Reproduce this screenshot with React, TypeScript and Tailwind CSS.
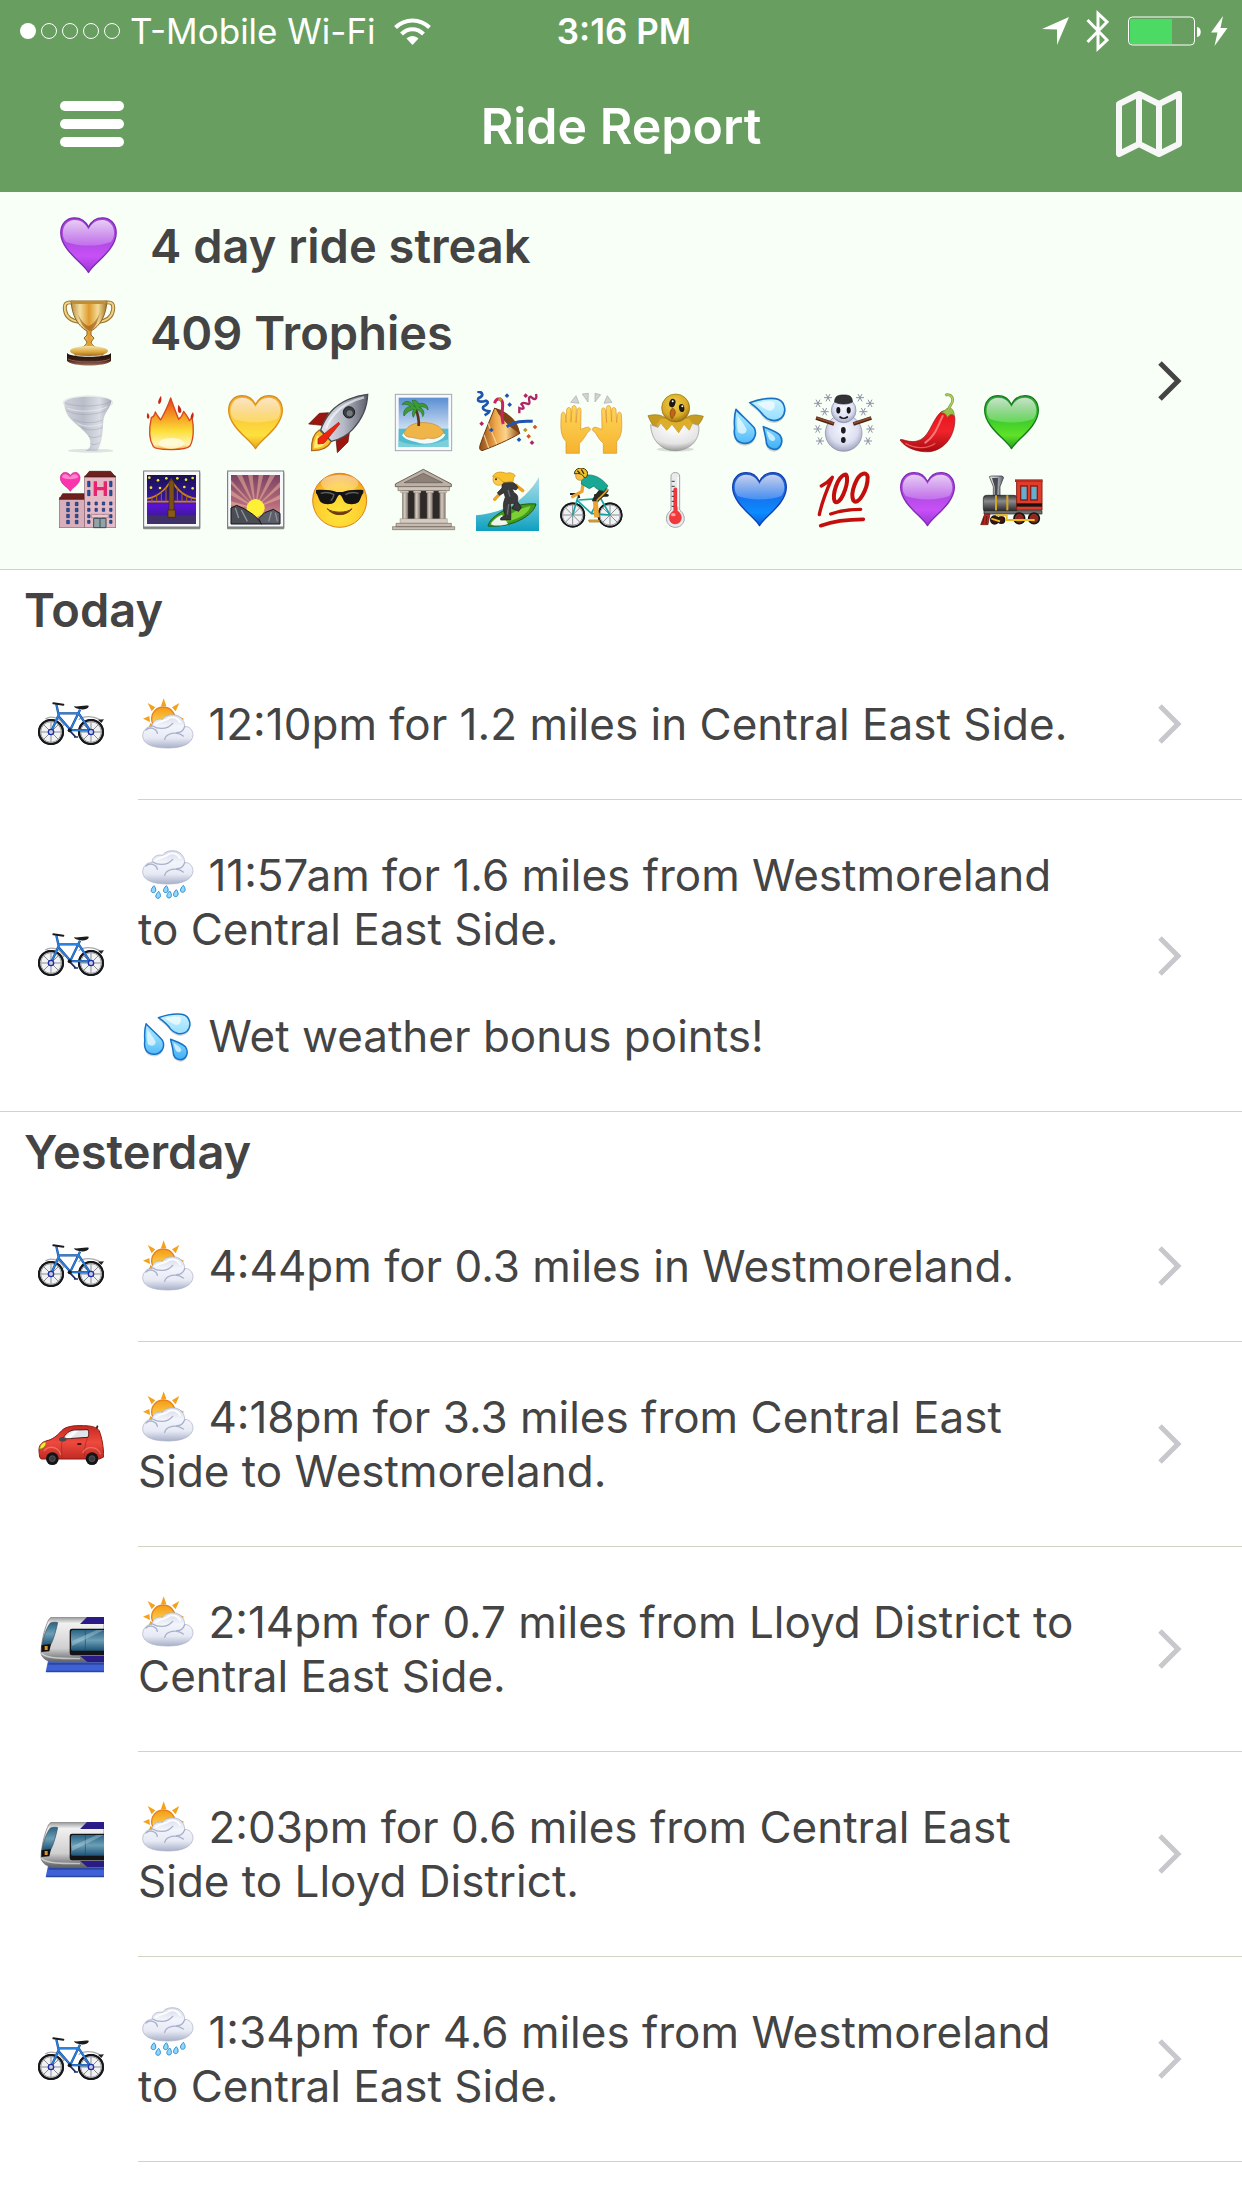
import type { ReactNode } from "react";

type ArtProps = { className?: string; view?: string };

function Art({ label, view, className, children }: { label: string; view: string; className?: string; children: ReactNode }) {
  return (
    <svg role="img" aria-label={label} viewBox={view} className={className ?? "size-16 shrink-0"} fill="none">
      {children}
    </svg>
  );
}

function lin(id: string, stops: [number, string][], horizontal = false) {
  return (
    <linearGradient id={id} x1="0" y1="0" x2={horizontal ? "1" : "0"} y2={horizontal ? "0" : "1"}>
      {stops.map(([o, c]) => (
        <stop key={o} offset={o} stopColor={c} />
      ))}
    </linearGradient>
  );
}

function Gradients() {
  return (
    <svg aria-hidden="true" className="absolute size-0">
      <defs>
        {lin("heartPurple", [[0, "#a545d8"], [0.45, "#b14be6"], [0.7, "#c850f6"], [1, "#9a35d8"]])}
        {lin("heartYellow", [[0, "#f2a426"], [0.4, "#fac93a"], [0.75, "#fde13c"], [1, "#e9a11f"]])}
        {lin("heartGreen", [[0, "#2f9a36"], [0.45, "#3ccb2c"], [0.75, "#5fe228"], [1, "#24a01f"]])}
        {lin("heartBlue", [[0, "#2456c8"], [0.45, "#1671ee"], [0.75, "#0a8cff"], [1, "#0a5fdc"]])}
        {lin("gloss", [[0, "#ffffffbb"], [1, "#ffffff33"]])}
        {lin("goldH", [[0, "#b98a3a"], [0.25, "#f3dfa0"], [0.5, "#e0992c"], [0.75, "#f3dc98"], [1, "#a5701f"]], true)}
        {lin("goldV", [[0, "#f6e3a4"], [0.6, "#dba63c"], [1, "#a06a1c"]])}
        {lin("wood", [[0, "#1d0f0b"], [0.55, "#3b1d14"], [1, "#a3745f"]])}
        {lin("flame", [[0, "#e5401c"], [0.35, "#f59a22"], [0.65, "#fde03a"], [0.9, "#fff3b8"], [1, "#f5a623"]])}
        {lin("tornadoFill", [[0, "#cfd2da"], [0.4, "#b9bdc8"], [0.75, "#dadde4"], [1, "#a7abb8"]], true)}
        {lin("steel", [[0, "#e6e8f0"], [0.5, "#b4b7c4"], [1, "#5d606c"]], true)}
        {lin("cone", [[0, "#8f4a18"], [0.4, "#f0a94b"], [0.65, "#fbd48c"], [1, "#8d4512"]], true)}
        {lin("skin", [[0, "#ffd65a"], [1, "#f5b32e"]])}
        {lin("dropFill", [[0, "#c9f1ff"], [0.5, "#8fdcff"], [1, "#3fb0f5"]])}
        {lin("sea", [[0, "#a9dde8"], [0.6, "#52bdd3"], [1, "#0e9fc0"]])}
        {lin("sky", [[0, "#5b8ed2"], [0.65, "#cfe1f3"], [1, "#4fb7cf"]])}
        {lin("sunset", [[0, "#7c4265"], [0.6, "#b56c7c"], [1, "#e6a08c"]])}
        {lin("night", [[0, "#17114f"], [0.5, "#3716a0"], [0.62, "#5a12d8"], [1, "#2b1d6b"]])}
        {lin("pillar", [[0, "#8c8178"], [0.4, "#d4cac0"], [1, "#83786f"]], true)}
        {lin("boiler", [[0, "#3c3c3e"], [0.35, "#8a8a8c"], [1, "#1e1e20"]])}
        {lin("sunFill", [[0, "#f59a17"], [0.5, "#fbc23c"], [1, "#ffe889"]])}
        {lin("cloudFill", [[0, "#d5d9e8"], [0.35, "#f3f5fc"], [0.7, "#e7eaf5"], [1, "#a9b0c8"]])}
        {lin("carRed", [[0, "#c5281f"], [0.5, "#ee4a3e"], [1, "#c02a22"]])}
        {lin("trainBody", [[0, "#8f9092"], [0.15, "#f1f1f1"], [0.7, "#cfcfd0"], [1, "#5f6063"]])}
        {lin("glass", [[0, "#2a6384"], [0.5, "#6c9fb6"], [1, "#1d5377"]])}
        {lin("peel", [[0, "#e8131b"], [0.5, "#f0232a"], [1, "#a80a10"]])}
        <radialGradient id="face" cx="0.5" cy="0.75" r="0.75">
          <stop offset="0" stopColor="#ffe63b" />
          <stop offset="0.7" stopColor="#fdc82c" />
          <stop offset="1" stopColor="#ee8f1b" />
        </radialGradient>
        <radialGradient id="ball" cx="0.5" cy="0.4" r="0.65">
          <stop offset="0" stopColor="#f6f7ff" />
          <stop offset="0.6" stopColor="#dcdff0" />
          <stop offset="1" stopColor="#9297b4" />
        </radialGradient>
        <radialGradient id="chick" cx="0.45" cy="0.35" r="0.7">
          <stop offset="0" stopColor="#f0cf45" />
          <stop offset="0.65" stopColor="#d8a928" />
          <stop offset="1" stopColor="#8a640f" />
        </radialGradient>
        <radialGradient id="shell" cx="0.5" cy="0.2" r="0.85">
          <stop offset="0" stopColor="#ffffff" />
          <stop offset="0.65" stopColor="#e4e4e4" />
          <stop offset="1" stopColor="#8e8e8e" />
        </radialGradient>
      </defs>
    </svg>
  );
}

const HEARTS = {
  purple: { fill: "url(#heartPurple)", edge: "#7f2bb5" },
  yellow: { fill: "url(#heartYellow)", edge: "#d98d1c" },
  green: { fill: "url(#heartGreen)", edge: "#167a1e" },
  blue: { fill: "url(#heartBlue)", edge: "#153fae" },
};

function Heart({ tone, className }: { tone: keyof typeof HEARTS; className?: string }) {
  const { fill, edge } = HEARTS[tone];
  return (
    <Art label={`${tone} heart`} view="0 0 192 192" className={className}>
      <path d="M94.500 173C82 148 14 108 14 58C14 31 31 14 54 14C72 14 87 25 94.500 41C102 25 117 14 135 14C158 14 175 31 175 58C175 108 107 148 94.500 173Z" fill={fill} stroke={edge} strokeWidth="4" strokeLinejoin="round" />
      <path d="M94.500 48C86 29 71 20 54 20C34 20 20 36 20 58C20 68 23 77 29 84C66 98 123 98 160 84C166 77 169 68 169 58C169 36 155 20 135 20C118 20 103 29 94.500 48Z" fill="url(#gloss)" />
    </Art>
  );
}

function Trophy({ className }: ArtProps) {
  return (
    <Art label="trophy" view="0 0 66 66" className={className}>
      <path d="M18 3C10 1 8 4 9 10C10 18 16 21 24 22M48 3C56 1 58 4 57 10C56 18 50 21 42 22" stroke="#9b7128" strokeWidth="4" />
      <path d="M18 3C10 1 8 4 9 10C10 18 16 21 24 22M48 3C56 1 58 4 57 10C56 18 50 21 42 22" stroke="#ecd389" strokeWidth="2" />
      <path d="M15 1H51C50 16 44 26 35 31V35L38 38L35 42C36 46 41 48 47 51V55H19V51C25 48 30 46 31 42L28 38L31 35V31C22 26 16 16 15 1Z" fill="url(#goldH)" stroke="#8d6423" strokeWidth="1" />
      <path d="M15 1H51L50 4H16Z" fill="#c28d33" />
      <path d="M33 26C38 24 42 18 44 12C42 22 39 28 34 31C27 28 24 22 22 14C25 21 29 25 33 26Z" fill="#8c4c12" opacity="0.55" />
      <ellipse cx="33" cy="51" rx="19" ry="5" fill="url(#goldV)" />
      <path d="M11 53C15 58 51 58 55 53V61C50 67 16 67 11 61Z" fill="url(#wood)" />
      <path d="M12 59C20 63 46 63 54 59" stroke="#8a5a48" strokeWidth="1" />
    </Art>
  );
}

function Tornado() {
  return (
    <Art label="tornado" view="48 33 192 192">
      <ellipse cx="144" cy="68" rx="76" ry="22" fill="#c9ccd6" opacity="0.35" />
      <path d="M74 66C84 48 196 44 214 62C212 84 192 98 190 122C188 156 186 190 172 213H136C150 206 156 196 148 174C136 148 92 128 80 100C74 88 72 76 74 66Z" fill="url(#tornadoFill)" />
      <path d="M74 68C100 82 186 82 214 64M80 92C110 108 170 106 196 92M100 118C130 132 166 130 188 120M124 142C146 154 170 150 188 142M146 168C158 176 172 172 184 166M150 190C160 196 170 194 178 188" stroke="#8b90a2" strokeWidth="3" opacity="0.35" />
      <path d="M82 84C110 98 174 96 202 80M112 130C140 144 168 138 188 132" stroke="#f4f5f9" strokeWidth="3" opacity="0.6" />
      <ellipse cx="152" cy="212" rx="68" ry="6" fill="#b5b9c4" opacity="0.4" />
    </Art>
  );
}

function Fire() {
  return (
    <Art label="fire" view="300 33 192 192">
      <path d="M346 96C350 106 358 114 362 120C372 102 384 78 392 54C400 78 408 98 416 118C424 112 428 104 431 94C440 106 446 114 448 122C452 118 454 114 456 112C462 140 462 176 450 198C438 212 350 212 340 200C326 178 328 140 334 112C340 112 344 104 346 96Z" fill="url(#flame)" stroke="#d9471f" strokeWidth="4" strokeLinejoin="round" />
      <ellipse cx="394" cy="190" rx="38" ry="16" fill="#fffbe0" opacity="0.8" />
      <path d="M363 47C366 58 364 68 358 72C352 70 354 60 363 47ZM415 74C424 84 428 96 420 99C412 98 413 86 415 74ZM323 98C328 104 331 112 325 116C319 114 320 106 323 98ZM459 96C463 106 461 114 456 117C449 114 452 106 459 96Z" fill="#c8241b" />
    </Art>
  );
}

function Rocket() {
  return (
    <Art label="rocket" view="804 33 192 192">
      <path d="M838 150C816 164 814 188 815 212C840 212 864 204 874 184Z" fill="#f4c02c" stroke="#b4671c" strokeWidth="4" />
      <path d="M832 166C824 180 822 194 822 204C838 204 850 198 858 188Z" fill="#ffee6a" />
      <path d="M866 98L838 100L806 132L846 136ZM928 158L924 186L892 218L888 176Z" fill="#9c1610" stroke="#5a0d0a" strokeWidth="2" />
      <path d="M983 43C950 46 900 62 872 96C856 116 846 138 842 150L874 184C900 178 922 166 938 148C968 116 982 76 983 43Z" fill="url(#steel)" stroke="#494b54" strokeWidth="4" />
      <path d="M972 52C940 60 904 76 882 104C870 120 862 134 858 146" stroke="#fff" strokeWidth="7" opacity="0.6" />
      <circle cx="927" cy="97" r="17" fill="#3b3d42" stroke="#1b1c1f" strokeWidth="3" />
      <circle cx="929" cy="100" r="9" fill="#75787f" />
      <path d="M896 127L834 176V192L852 190L899 132Z" fill="#ef2410" stroke="#9c1610" strokeWidth="2" />
    </Art>
  );
}

function Island() {
  return (
    <Art label="desert island" view="66 33 192 192">
      <rect x="76" y="43" width="169" height="169" fill="#f7f8fb" stroke="#a6a7ae" strokeWidth="3" />
      <rect x="86" y="53" width="149" height="148" fill="url(#sky)" />
      <rect x="86" y="146" width="149" height="55" fill="#52bccc" />
      <path d="M96 166C110 184 132 182 150 190C176 194 214 186 226 164L214 156H104Z" fill="#eefafc" />
      <path d="M86 182C120 196 170 202 235 178V201H86Z" fill="#8cd7df" opacity="0.7" />
      <path d="M102 158C114 132 142 126 168 128C196 130 216 142 221 158C210 174 190 178 172 174C158 182 136 174 124 172C112 172 104 168 102 158Z" fill="#efb548" stroke="#c98a28" strokeWidth="2" />
      <path d="M146 138C148 116 142 98 136 84" stroke="#5c3417" strokeWidth="8" />
      <path d="M136 82C122 60 104 60 96 74C108 70 118 76 122 80C108 80 98 92 102 108C110 96 122 90 132 88C126 96 126 104 130 112C134 102 138 96 140 88C150 92 158 100 158 110C166 98 160 86 148 82C160 78 168 82 174 90C176 74 158 66 146 72C144 64 134 58 126 62Z" fill="#3d9b33" stroke="#1f6b22" strokeWidth="2" />
    </Art>
  );
}

function Party() {
  return (
    <Art label="party popper" view="318 33 192 192">
      <path d="M374 84C398 96 434 130 450 160C420 178 370 200 336 212C328 210 328 204 330 196C342 160 360 120 374 84Z" fill="url(#cone)" stroke="#6d3a10" strokeWidth="3" />
      <path d="M376 84C410 92 448 126 449 160C420 142 390 116 376 84Z" fill="#7c4416" />
      <path d="M354 130L380 192M342 164L356 204" stroke="#fde2a6" strokeWidth="4" opacity="0.7" />
      <path d="M374 70C378 52 398 52 398 74C398 96 392 110 400 132" stroke="#c5265f" strokeWidth="9" />
      <path d="M410 140C436 124 456 122 488 124" stroke="#1f55b0" strokeWidth="9" />
      <path d="M322 34C340 36 342 48 326 54C320 64 330 68 348 62C358 66 352 74 340 80C336 88 344 92 358 94C356 100 350 102 344 106" stroke="#1f55b0" strokeWidth="8" />
      <path d="M498 42C502 58 494 62 482 50C470 52 484 70 476 72C466 70 458 64 454 72C464 84 464 90 448 84V100" stroke="#b02564" strokeWidth="7" />
      <path d="M404 47L411 40L418 47L411 54ZM412 74L419 67L426 74L419 81ZM440 179L447 172L454 179L447 186ZM357 150L364 143L371 150L364 157Z" fill="#1f55b0" />
      <path d="M384 58L391 51L398 58L391 65ZM459 150L466 143L473 150L466 157Z" fill="#b4962a" />
      <path d="M328 131L335 124L342 131L335 138ZM460 47L467 40L474 47L467 54ZM479 188L486 181L493 188L486 195Z" fill="#b02564" />
      <path d="M488 141L495 134L502 141L495 148ZM469 169L476 162L483 169L476 176Z" fill="#cf5a20" />
    </Art>
  );
}

function Hands() {
  const hand = "M588 220V184C574 170 570 150 574 104C575 94 584 94 586 104L588 128L590 90C591 80 602 80 603 90V126L606 84C607 74 619 74 619 86L618 128L622 90C624 80 634 82 633 92L632 148C642 146 648 140 656 142C666 148 660 152 652 158C644 172 636 184 628 190V220Z";
  return (
    <Art label="raising hands" view="570 33 192 192">
      <path d={hand} fill="url(#skin)" stroke="#dd8f2a" strokeWidth="2" />
      <g transform="matrix(-1 0 0 1 1328 0)">
        <path d={hand} fill="url(#skin)" stroke="#dd8f2a" strokeWidth="2" />
      </g>
      <path d="M618 47L627 70L602 67ZM637 42L655 40L654 66ZM675 40L692 44L675 66ZM712 47L726 67L702 70Z" fill="#d3d3d3" stroke="#aaaaaa" strokeWidth="2" />
    </Art>
  );
}

function Chick() {
  return (
    <Art label="hatching chick" view="822 33 192 192">
      <ellipse cx="916" cy="208" rx="56" ry="7" fill="#000" opacity="0.12" />
      <path d="M834 107C852 103 868 102 884 112H950C966 102 982 104 1000 109C994 126 984 138 972 146H862C848 140 840 122 834 107Z" fill="#c79a22" stroke="#94700f" strokeWidth="2" />
      <path d="M842 134C842 172 868 212 916 212C966 212 992 172 986 136L966 130L958 150L942 132L926 158L906 132L890 150L872 128L864 142Z" fill="url(#shell)" stroke="#8d8d8d" strokeWidth="2" />
      <path d="M860 134L872 116H958L968 132L958 152L942 134L926 160L906 134L890 152L872 130L864 142Z" fill="#dcae2c" />
      <circle cx="917" cy="84" r="42" fill="url(#chick)" stroke="#93700e" strokeWidth="2" />
      <ellipse cx="907" cy="69" rx="9" ry="13" transform="rotate(18 907 69)" fill="#1c1712" />
      <ellipse cx="935" cy="84" rx="8" ry="12" transform="rotate(-8 935 84)" fill="#1c1712" />
      <circle cx="908" cy="64" r="3" fill="#fff" />
      <circle cx="937" cy="79" r="3" fill="#fff" />
      <path d="M908 84C918 92 920 100 906 116C898 106 898 94 908 84Z" fill="#c2641a" stroke="#7d3c0c" strokeWidth="2" />
    </Art>
  );
}

function Drops({ className, view = "84 33 192 192" }: ArtProps) {
  const drops = "M149 68C176 58 206 54 226 56C256 60 262 96 244 114C224 130 200 118 190 106C180 92 164 78 149 68ZM108 88C120 102 150 128 163 144C174 168 156 192 132 190C106 188 100 166 104 144C102 124 104 102 108 88ZM190 140C204 146 230 154 240 166C252 184 242 208 222 208C200 206 198 190 198 178C196 164 192 152 190 140Z";
  return (
    <Art label="sweat droplets" view={view} className={className}>
      <path d={drops} transform="translate(0 7)" fill="#000" opacity="0.16" />
      <path d={drops} fill="url(#dropFill)" stroke="#1873c6" strokeWidth="5" strokeLinejoin="round" />
      <path d="M170 70C192 64 212 62 222 66C228 78 222 92 208 92C192 86 182 78 170 70ZM113 108C122 120 138 140 140 150C138 164 122 164 114 156C110 142 112 124 113 108ZM200 152C210 158 224 166 226 176C224 186 212 184 208 178C204 170 202 162 200 152Z" fill="#fff" opacity="0.65" />
    </Art>
  );
}

function Snowman() {
  const flakes = [[384, 53], [354, 70], [374, 95], [353, 147], [360, 183], [480, 53], [510, 70], [490, 95], [511, 147], [504, 183]];
  return (
    <Art label="snowman" view="336 33 192 192">
      {flakes.map(([x, y]) => (
        <path key={`${x}-${y}`} d="M-12 0H12M-6 -11L6 11M6 -11L-6 11" transform={`translate(${x} ${y})`} stroke="#8d92a6" strokeWidth="3" />
      ))}
      <circle cx="431" cy="159" r="55" fill="url(#ball)" stroke="#8287a3" strokeWidth="2" />
      <circle cx="431" cy="91" r="37" fill="url(#ball)" stroke="#8287a3" strokeWidth="2" />
      <path d="M348 114L402 132M514 114L460 132" stroke="#4c2314" strokeWidth="11" />
      <path d="M349 113L401 130M513 113L461 130" stroke="#8c4c2d" strokeWidth="5" />
      <path d="M404 66C404 48 414 45 431 45C448 45 457 48 457 66C444 74 418 74 404 66Z" fill="#333336" stroke="#151517" strokeWidth="2" />
      <ellipse cx="415" cy="91" rx="6" ry="10" fill="#151517" />
      <ellipse cx="446" cy="91" rx="6" ry="10" fill="#151517" />
      <path d="M420 111C426 116 436 116 442 111" stroke="#151517" strokeWidth="5" strokeLinecap="round" />
      <ellipse cx="430" cy="151" rx="7" ry="10" fill="#1d1d22" />
      <ellipse cx="430" cy="180" rx="7" ry="9" fill="#1d1d22" />
    </Art>
  );
}

function Pepper() {
  return (
    <Art label="hot pepper" view="588 33 192 192">
      <path d="M723 96C734 88 756 94 764 110C768 148 748 206 690 215C654 218 616 204 600 180C604 174 622 188 648 184C690 176 692 124 723 96Z" fill="url(#peel)" stroke="#8b0b10" strokeWidth="2" />
      <path d="M728 108C714 136 706 168 676 188" stroke="#ff8f8c" strokeWidth="6" strokeLinecap="round" opacity="0.8" />
      <path d="M616 190C640 204 680 210 706 190" stroke="#f77a78" strokeWidth="4" opacity="0.7" />
      <path d="M724 98C732 92 738 90 742 84C756 82 762 90 763 108C756 98 748 104 742 112C738 100 732 98 724 98Z" fill="#9ebf4c" stroke="#6a8a27" strokeWidth="2" />
      <path d="M746 90C746 76 760 72 758 58C756 44 742 42 736 46" stroke="#7d9b35" strokeWidth="8" />
      <path d="M746 90C746 76 760 72 758 58C756 44 742 42 736 46" stroke="#b3d163" strokeWidth="4" />
    </Art>
  );
}

function Hotel() {
  const left = [367, 385, 403, 421];
  const right = [312, 339, 366, 385, 404, 421];
  return (
    <Art label="love hotel" view="48 264 192 192">
      <rect x="58" y="352" width="76" height="91" fill="#d8aebb" stroke="#8d6876" strokeWidth="2" />
      <path d="M68 341H133V358H58Z" fill="#6e211c" stroke="#401110" strokeWidth="2" />
      <rect x="134" y="288" width="93" height="155" fill="#e3bac6" stroke="#8d6876" strokeWidth="2" />
      <path d="M148 274H212L227 291H134Z" fill="#6e211c" stroke="#401110" strokeWidth="2" />
      {left.map((y) => (
        <path key={y} d={`M80 ${y}h8v10h-8ZM106 ${y}h8v10h-8Z`} fill="#2357a8" stroke="#1b2c60" strokeWidth="2" />
      ))}
      {right.map((y, i) => (
        <path key={y} d={i < 2 ? `M143 ${y - 8}h7v16h-7ZM209 ${y - 8}h7v16h-7Z` : `M143 ${y}h7v9h-7ZM165 ${y}h7v9h-7ZM187 ${y}h7v9h-7ZM209 ${y}h7v9h-7Z`} fill="#2357a8" stroke="#1b2c60" strokeWidth="2" />
      ))}
      <path d="M166 304V348M196 304V348M166 326H196" stroke="#e5266f" strokeWidth="10" />
      <path d="M154 403H205V413H154Z" fill="#e9c7d0" stroke="#9c7683" strokeWidth="2" />
      <path d="M161 415H198V443H161ZM180 415V443" fill="#91a3a8" stroke="#3f4a4e" strokeWidth="3" />
      <path d="M91 334C85 322 61 314 61 294C61 274 84 272 91 287C98 272 120 274 120 294C120 314 97 322 91 334Z" fill="#fb35ae" stroke="#c92089" strokeWidth="2" />
      <path d="M66 292C68 280 82 280 90 292C98 280 112 280 115 292C106 300 76 300 66 292Z" fill="#fff" opacity="0.4" />
    </Art>
  );
}

function PhotoFrame({ x }: { x: number }) {
  return (
    <>
      <rect x={x - 2} y="276" width="172" height="172" rx="3" fill="#000" opacity="0.45" />
      <rect x={x} y="273" width="168" height="168" fill="#f8f8fa" stroke="#77787c" strokeWidth="3" />
    </>
  );
}

function Bridge() {
  return (
    <Art label="bridge at night" view="300 264 192 192">
      <PhotoFrame x={311} />
      <rect x="321" y="285" width="147" height="147" fill="url(#night)" />
      <path d="M321 406H468V432H321Z" fill="#3f3068" />
      <path d="M321 356C348 352 376 332 394 300C412 332 440 352 468 356M321 365H468" stroke="#c98317" strokeWidth="5" />
      <path d="M336 353V365M350 345V365M364 336V365M378 322V365M412 322V365M426 336V365M440 345V365M454 353V365" stroke="#a8660f" strokeWidth="3" />
      <path d="M387 412V308L394 298L402 308V412Z" fill="#7b5216" stroke="#3a240a" strokeWidth="2" />
      <path d="M384 390H406V412H384Z" fill="#8a5b18" stroke="#3a240a" strokeWidth="2" />
      {[[328, 293], [354, 301], [379, 295], [412, 295], [438, 299], [458, 294], [333, 323], [360, 324], [433, 321], [458, 325]].map(([x, y]) => (
        <circle key={`${x}-${y}`} cx={x} cy={y} r="4" fill="#e9e633" />
      ))}
    </Art>
  );
}

function Sunrise() {
  return (
    <Art label="sunrise over mountains" view="552 264 192 192">
      <PhotoFrame x={563} />
      <rect x="573" y="285" width="147" height="147" fill="url(#sunset)" />
      <path d="M646 384L573 330V346ZM646 384L590 285H606ZM646 384L624 285H638ZM646 384L656 285H670ZM646 384L690 285H706ZM646 384L720 306V322ZM646 384L720 344V358ZM646 384L573 300V312ZM646 384L573 364V376Z" fill="#f2bd9b" opacity="0.5" />
      <circle cx="647" cy="384" r="27" fill="#fdf035" />
      <path d="M573 384L590 376L612 386L640 404L660 424L666 432H573Z" fill="#4b4d55" stroke="#15161a" strokeWidth="3" />
      <path d="M656 416L674 398L700 388L720 400V432H664Z" fill="#5c5e68" stroke="#15161a" strokeWidth="3" />
      <path d="M586 384L596 414M604 390L622 424M694 396L686 424M706 398L712 424" stroke="#8f919a" strokeWidth="4" />
    </Art>
  );
}

function Sunglasses() {
  return (
    <Art label="smiling face with sunglasses" view="804 264 192 192">
      <circle cx="899" cy="361" r="81" fill="url(#face)" stroke="#dd8319" strokeWidth="3" />
      <ellipse cx="899" cy="310" rx="56" ry="26" fill="url(#gloss)" opacity="0.7" />
      <path d="M828 330C850 328 876 330 890 336H908C922 330 948 328 970 330V340C964 344 964 356 956 366C944 376 922 374 914 366C908 358 906 346 899 344C892 346 890 358 884 366C876 374 854 376 842 366C834 356 834 344 828 340Z" fill="#141414" />
      <path d="M842 340C856 336 872 338 882 344C880 352 878 358 872 362M916 344C926 338 942 336 956 340" stroke="#5d5d5d" strokeWidth="4" />
      <path d="M862 386C880 410 918 410 936 386C922 400 876 400 862 386Z" fill="#6f3a12" stroke="#6f3a12" strokeWidth="3" strokeLinejoin="round" />
    </Art>
  );
}

function Museum() {
  return (
    <Art label="classical building" view="66 264 192 192">
      <rect x="100" y="328" width="122" height="98" fill="#2e2a29" />
      <path d="M160 268L244 312V320H76V312Z" fill="#bcb0a5" stroke="#6f655e" strokeWidth="3" />
      <path d="M160 280L218 308H102Z" fill="#8d8178" stroke="#655b54" strokeWidth="2" />
      <path d="M84 320H238V332H84Z" fill="#cfc4ba" stroke="#776c64" strokeWidth="2" />
      {[97, 133, 171, 209].map((x) => (
        <rect key={x} x={x} y="332" width="17" height="88" fill="url(#pillar)" stroke="#6f655e" strokeWidth="1" />
      ))}
      <path d="M92 332H116V338H92ZM130 332H153V338H130ZM168 332H191V338H168ZM206 332H230V338H206ZM90 416H232V430H90Z" fill="#d5cbc2" stroke="#776c64" strokeWidth="1" />
      <path d="M78 430H244V440H78ZM67 440H254V449H67Z" fill="#c6bbb1" stroke="#776c64" strokeWidth="2" />
    </Art>
  );
}

function Surfer() {
  return (
    <Art label="surfer" view="318 264 192 192">
      <path d="M318 406C380 400 460 376 507 291V453H318Z" fill="url(#sea)" />
      <path d="M498 372C490 408 424 444 354 438C360 408 428 366 498 372Z" fill="#3f9c1c" stroke="#1f5c10" strokeWidth="3" />
      <path d="M482 378C452 384 410 404 382 430C436 424 474 404 482 378Z" fill="#7ccf32" />
      <path d="M364 428C374 416 386 408 396 404L414 432C394 438 378 438 364 434Z" fill="#fff" opacity="0.9" />
      <path d="M396 334L374 358M438 316L458 332" stroke="#eaa429" strokeWidth="10" strokeLinecap="round" />
      <path d="M396 306C408 300 424 302 436 312L444 322L438 330L426 326L432 338C442 342 446 352 442 364L454 382L446 394L426 386L434 370L422 372C420 386 424 400 422 420H392V414L406 406C398 388 398 370 406 352L402 338L388 346L382 338L396 324Z" fill="#3a3a3c" stroke="#18181a" strokeWidth="2" />
      <path d="M414 330L420 350M416 372L412 404" stroke="#6c6c70" strokeWidth="4" />
      <circle cx="386" cy="299" r="17" fill="#fbc94b" stroke="#c88a23" strokeWidth="2" />
      <path d="M368 290C374 274 396 274 408 280C420 276 432 280 436 288C428 290 432 300 428 306C416 304 402 310 396 304C392 294 380 292 368 290Z" fill="#f9c22d" stroke="#c98c1d" strokeWidth="2" />
      <circle cx="378" cy="298" r="3" fill="#4a2c0c" />
    </Art>
  );
}

function Wheel({ cx, cy, r, tyre }: { cx: number; cy: number; r: number; tyre: number }) {
  return (
    <g>
      <circle cx={cx} cy={cy} r={r} fill="#f1f2f3" stroke="#17181a" strokeWidth={tyre} />
      <path d={`M${cx - r} ${cy}H${cx + r}M${cx} ${cy - r}V${cy + r}M${cx - r * 0.7} ${cy - r * 0.7}L${cx + r * 0.7} ${cy + r * 0.7}M${cx + r * 0.7} ${cy - r * 0.7}L${cx - r * 0.7} ${cy + r * 0.7}`} stroke="#8b8d91" strokeWidth="3" />
      <circle cx={cx} cy={cy} r={r - tyre / 2 - 2} stroke="#9a9ca1" strokeWidth="3" />
      <circle cx={cx} cy={cy} r={r} stroke="#17181a" strokeWidth={tyre} />
    </g>
  );
}

function Cyclist() {
  return (
    <Art label="cyclist" view="570 264 192 192">
      <Wheel cx={608} cy={405} r={35} tyre={5} />
      <Wheel cx={720} cy={405} r={35} tyre={5} />
      <path d="M608 405L624 350M622 362L664 400L690 352L720 405M626 360L688 356M664 400L720 405" stroke="#17a3a4" strokeWidth="5" />
      <path d="M600 342H624L628 354" stroke="#222" strokeWidth="6" />
      <path d="M676 346H712" stroke="#222" strokeWidth="8" strokeLinecap="round" />
      <path d="M640 304L636 334L608 350" stroke="#eda431" strokeWidth="10" strokeLinecap="round" />
      <path d="M700 336L676 362L680 412" stroke="#eda431" strokeWidth="15" strokeLinejoin="round" />
      <path d="M700 318L716 330C710 346 694 354 686 364L666 364C668 350 682 340 692 322Z" fill="#2b2a20" />
      <path d="M714 326C702 344 690 350 680 362" stroke="#dca02b" strokeWidth="5" />
      <path d="M636 290C656 278 690 286 714 318L702 334C686 330 676 326 672 318L658 326L634 312Z" fill="#19a894" stroke="#0b6b60" strokeWidth="2" />
      <circle cx="630" cy="288" r="13" fill="#f8bf45" stroke="#bd7d1d" strokeWidth="2" />
      <path d="M614 276C620 260 646 260 652 276C654 290 648 294 642 292C638 282 626 278 614 282Z" fill="#efc42a" stroke="#3f3208" strokeWidth="3" />
      <path d="M622 272L630 280M634 268L642 282" stroke="#3f3208" strokeWidth="4" />
      <path d="M656 420H688V426H658Z" fill="#f1b93b" stroke="#8c5a13" strokeWidth="2" />
    </Art>
  );
}

function Thermometer() {
  return (
    <Art label="thermometer" view="822 264 192 192">
      <path d="M903 288C903 274 929 274 929 288V390C954 410 942 442 916 442C890 442 878 410 903 390Z" fill="#e9eaec" stroke="#a2a4aa" strokeWidth="3" />
      <path d="M911 328C911 322 922 322 922 328V392C942 404 936 432 916 432C896 432 890 404 911 392Z" fill="#f0393b" stroke="#c92226" strokeWidth="1" />
      <ellipse cx="910" cy="404" rx="7" ry="5" fill="#fff" opacity="0.55" />
      <path d="M905 304H914M905 319H914M905 334H912M905 349H912M905 364H912M905 379H912" stroke="#3a3a3c" strokeWidth="3" />
      <path d="M924 290V380" stroke="#fff" strokeWidth="4" />
    </Art>
  );
}

function Hundred() {
  return (
    <Art label="hundred points" view="336 264 192 192">
      <g stroke="#c40d0d" strokeLinecap="round" strokeLinejoin="round">
        <path d="M364 318C376 312 388 302 397 292C382 326 366 362 358 404" strokeWidth="10" />
        <path d="M434 284C412 292 396 344 404 364C420 380 444 318 441 292C440 284 438 282 434 284Z" strokeWidth="12" />
        <path d="M490 281C470 286 450 338 460 361C474 380 504 326 503 291C502 282 496 280 490 281Z" strokeWidth="12" />
        <path d="M392 402C420 392 450 388 482 388" strokeWidth="10" />
        <path d="M362 437C398 424 446 418 490 418" strokeWidth="11" />
      </g>
    </Art>
  );
}

function Locomotive() {
  return (
    <Art label="locomotive" view="840 264 192 192">
      <path d="M868 290L874 288H906L911 292L900 320V348H880V320Z" fill="url(#steel)" stroke="#2c2c2e" strokeWidth="2" />
      <path d="M876 294L884 320V346H892L894 294Z" fill="#4a4a4d" />
      <rect x="850" y="346" width="102" height="50" rx="10" fill="url(#boiler)" stroke="#19191a" strokeWidth="2" />
      <path d="M888 346V396M922 346V396" stroke="#d9a41d" strokeWidth="6" />
      <path d="M950 302H1026V390H950Z" fill="#e03c2c" stroke="#8e1e14" strokeWidth="3" />
      <path d="M945 298H1028V306H945Z" fill="#b92c1f" />
      <path d="M962 318H982V360H962ZM992 318H1012V360H992Z" fill="#64aed0" stroke="#8e1e14" strokeWidth="4" />
      <path d="M950 370H1026V380H950Z" fill="#151515" />
      <path d="M852 392H1026V402H852Z" fill="#6f7072" stroke="#222" strokeWidth="2" />
      <circle cx="884" cy="420" r="12" fill="#3c1512" stroke="#171717" strokeWidth="4" />
      <circle cx="904" cy="420" r="10" fill="#3c1512" stroke="#171717" strokeWidth="4" />
      <circle cx="958" cy="415" r="16" fill="#8d2a20" stroke="#171717" strokeWidth="5" />
      <circle cx="1002" cy="415" r="16" fill="#8d2a20" stroke="#171717" strokeWidth="5" />
      <path d="M888 406H920V420H1004M874 416L900 424" stroke="#f0b91c" strokeWidth="6" />
      <path d="M854 402H870L864 434H842Z" fill="#b5281d" stroke="#5c130d" strokeWidth="2" />
      <path d="M852 410L848 432M860 408L858 432" stroke="#3a0d09" strokeWidth="2" />
    </Art>
  );
}

const CLOUD = "M456 500C446 498 430 506 428 526C428 552 456 564 504 564C552 564 578 548 579 524C578 508 566 498 554 500C554 478 538 464 518 464C500 464 490 472 488 478C470 474 456 484 456 500Z";

function Cloud() {
  return (
    <>
      <path d={CLOUD} fill="url(#cloudFill)" stroke="#a5adc6" strokeWidth="2" />
      <path d="M438 510C448 498 470 506 472 520M494 538C498 520 530 512 550 528M458 498C470 506 500 512 518 490M554 500C550 512 540 518 530 518" stroke="#a9b1ca" strokeWidth="4" strokeLinecap="round" />
      <path d="M468 492C482 480 500 484 506 474C520 468 534 474 540 486" stroke="#fff" strokeWidth="6" strokeLinecap="round" opacity="0.9" />
    </>
  );
}

function SunCloud({ className }: ArtProps) {
  return (
    <Art label="sun behind cloud" view="414 411 168 162" className={className}>
      <path d="M491 415L499 438H483ZM443 429L466 442L455 454ZM538 429L527 454L516 442ZM429 476L448 468L450 486ZM553 477L534 468L532 486ZM442 510L452 488L462 500Z" fill="#f5a21b" />
      <circle cx="490" cy="476" r="35" fill="url(#sunFill)" stroke="#e5821a" strokeWidth="4" />
      <Cloud />
    </Art>
  );
}

function RainCloud({ className }: ArtProps) {
  return (
    <Art label="cloud with rain" view="414 84 168 162" className={className}>
      <g transform="translate(0 -372)">
        <Cloud />
      </g>
      {[[460, 197], [474, 214], [497, 197], [507, 213], [527, 209], [548, 196]].map(([x, y]) => (
        <path key={x} d="M2 0C9 8 10 20 0 21C-10 20 -8 10 2 0Z" transform={`translate(${x} ${y})`} fill="#8fd8fb" stroke="#2e8fd0" strokeWidth="3" />
      ))}
    </Art>
  );
}

function Bike({ className }: ArtProps) {
  return (
    <Art label="bicycle" view="114 393 198 198" className={className}>
      <path d="M136 474C150 464 182 466 192 496M236 476C256 460 292 468 304 480" stroke="#a8aaae" strokeWidth="4" />
      <path d="M294 476L312 475L304 486Z" fill="#222" />
      <Wheel cx={153} cy={513} r={36} tyre={6} />
      <Wheel cx={273} cy={513} r={36} tyre={6} />
      <path d="M169 430L176 462L153 513M174 457H236M176 466L211 506L240 446M236 457L273 513M208 507L273 508" stroke="#164f9e" strokeWidth="7" strokeLinejoin="round" />
      <path d="M169 430L176 462L153 513M174 457H236M176 466L211 506L240 446M236 457L273 513M208 507L273 508" stroke="#2b82df" strokeWidth="4" strokeLinejoin="round" />
      <path d="M160 427L190 431" stroke="#1c1c1e" strokeWidth="6" strokeLinecap="round" />
      <path d="M222 436C236 438 250 432 266 434C268 442 252 447 240 445C232 442 224 442 222 436Z" fill="#1c1c1e" />
      <circle cx="153" cy="513" r="8" fill="#c7ccda" stroke="#1d2fa8" strokeWidth="4" />
      <circle cx="273" cy="513" r="8" fill="#c7ccda" stroke="#1d2fa8" strokeWidth="4" />
      <path d="M208 508L226 527M222 528H234" stroke="#1c2c66" strokeWidth="5" />
      <circle cx="209" cy="508" r="6" fill="#17181a" />
    </Art>
  );
}

function Car({ className }: ArtProps) {
  return (
    <Art label="car" view="114 123 198 198" className={className}>
      <path d="M282 174L290 172L293 164" stroke="#1c1c1e" strokeWidth="5" />
      <path d="M117 240C116 224 124 214 138 210C156 206 170 196 184 180C196 166 222 163 250 164C272 164 292 168 298 180C306 200 311 230 311 258L298 264H124C118 262 118 250 117 240Z" fill="url(#carRed)" stroke="#8f1b16" strokeWidth="3" />
      <path d="M188 204C196 188 208 178 224 177L264 176C267 184 267 192 264 199Z" fill="#dfe5e8" stroke="#54191a" strokeWidth="3" />
      <path d="M192 201L222 179H236L212 202Z" fill="#fff" opacity="0.8" />
      <ellipse cx="188" cy="205" rx="11" ry="7" fill="#4a4a4e" />
      <path d="M185 214V262M262 202C254 220 252 240 254 258" stroke="#a92620" strokeWidth="2" />
      <path d="M232 219H244" stroke="#2b0b0a" strokeWidth="5" />
      <path d="M119 234C120 220 130 212 138 214C138 224 130 234 119 234Z" fill="#f3ee2e" stroke="#9b8d18" strokeWidth="2" />
      <path d="M132 240C146 222 176 226 182 252M248 246C258 224 292 224 302 250" stroke="#ff8c80" strokeWidth="4" opacity="0.6" />
      <circle cx="157" cy="263" r="19" fill="#141416" />
      <circle cx="276" cy="263" r="19" fill="#141416" />
      <circle cx="157" cy="263" r="9" fill="#3b3b3f" stroke="#606066" strokeWidth="2" />
      <circle cx="276" cy="263" r="9" fill="#3b3b3f" stroke="#606066" strokeWidth="2" />
    </Art>
  );
}

function Train({ className }: ArtProps) {
  return (
    <Art label="light rail" view="114 717 198 198" className={className}>
      <g transform="translate(0 -14)">
        <path d="M144 862H312V896H137Z" fill="#3f60d6" />
        <path d="M146 868H312V874H145ZM140 892H312V897H138Z" fill="#2a479f" />
        <path d="M160 730H312V866H160C140 866 124 852 123 838C124 806 132 772 142 748C146 736 152 731 160 730Z" fill="url(#trainBody)" stroke="#6c6d70" strokeWidth="2" />
        <path d="M262 730H312V752H240ZM240 848H312V866H262Z" fill="#2a1c86" />
        <path d="M150 750C156 746 168 746 173 748C168 772 160 800 152 814L126 816C130 790 140 764 150 750Z" fill="url(#glass)" stroke="#3c4d58" strokeWidth="2" />
        <path d="M124 816L153 812L148 834L124 836Z" fill="#101012" />
        <path d="M134 818H143V830H134Z" fill="#d8942a" />
        <rect x="209" y="766" width="112" height="80" rx="7" fill="#141416" />
        <rect x="213" y="770" width="110" height="62" rx="5" fill="url(#glass)" />
        <path d="M256 770V832" stroke="#17506f" strokeWidth="2" />
        <path d="M216 804L290 770H312L216 818Z" fill="#c8e0ea" opacity="0.35" />
        <path d="M124 840C136 852 160 856 240 856" stroke="#fff" strokeWidth="4" opacity="0.55" />
      </g>
    </Art>
  );
}

function Chevron({ className }: { className: string }) {
  return (
    <svg aria-hidden="true" viewBox="0 0 24 40" className={className} fill="none" stroke="currentColor" strokeWidth="5">
      <path d="M2 2L20 20L2 38" />
    </svg>
  );
}

type Mode = "bike" | "car" | "train";
type Trip = { mode: Mode; rain?: boolean; text: string; bonus?: string };

const SECTIONS: { title: string; trips: Trip[] }[] = [
  {
    title: "Today",
    trips: [
      { mode: "bike", text: "12:10pm for 1.2 miles in Central East Side." },
      { mode: "bike", rain: true, text: "11:57am for 1.6 miles from Westmoreland to Central East Side.", bonus: "Wet weather bonus points!" },
    ],
  },
  {
    title: "Yesterday",
    trips: [
      { mode: "bike", text: "4:44pm for 0.3 miles in Westmoreland." },
      { mode: "car", text: "4:18pm for 3.3 miles from Central East Side to Westmoreland." },
      { mode: "train", text: "2:14pm for 0.7 miles from Lloyd District to Central East Side." },
      { mode: "train", text: "2:03pm for 0.6 miles from Central East Side to Lloyd District." },
      { mode: "bike", rain: true, text: "1:34pm for 4.6 miles from Westmoreland to Central East Side." },
    ],
  },
];

const MODE_ICON = { bike: Bike, car: Car, train: Train };

function TripRow({ trip, last }: { trip: Trip; last: boolean }) {
  const ModeIcon = MODE_ICON[trip.mode];
  const Weather = trip.rain ? RainCloud : SunCloud;
  const inline = "mr-0.5 inline-block h-[54px] w-14 align-top";
  return (
    <li className={last ? "border-b border-[#cdd6c1]" : ""}>
      <a href="#trip" className="flex items-stretch pl-[38px]">
        <ModeIcon className="mr-[34px] size-[66px] shrink-0 self-center" />
        <div className={last ? "flex flex-1 items-center py-12 pr-15" : "flex flex-1 items-center border-b border-[#cdd6c1] py-12 pr-15"}>
          <div className="mr-20 flex-1 text-[44px] leading-[54px]">
            <p>
              <Weather className={inline} /> {trip.text}
            </p>
            {trip.bonus && (
              <p className="mt-[53px]">
                <Drops view="81 39 187 180" className={inline} /> {trip.bonus}
              </p>
            )}
          </div>
          <Chevron className="h-10 w-6 shrink-0 text-[#c7c7cc]" />
        </div>
      </a>
    </li>
  );
}

function StatusBar() {
  return (
    <div className="grid h-15 grid-cols-[1fr_auto_1fr] items-center pt-0.5 pr-3.5 pl-5 text-[35px] leading-10">
      <div className="flex items-center">
        <span className="flex gap-[5px]" role="img" aria-label="Signal strength: 1 of 5">
          <span className="size-4 rounded-full bg-white" />
          <span className="size-4 rounded-full border border-white" />
          <span className="size-4 rounded-full border border-white" />
          <span className="size-4 rounded-full border border-white" />
          <span className="size-4 rounded-full border border-white" />
        </span>
        <span className="ml-2.5">T-Mobile Wi-Fi</span>
        <svg role="img" aria-label="Wi-Fi" viewBox="0 0 37 27" className="ml-4.5 h-[27px] w-[37px]" fill="none" stroke="#fff" strokeWidth="4">
          <path d="M1.500 9.500C11 0 26 0 35.500 9.500" />
          <path d="M7.500 16C14 9.500 23 9.500 29.500 16" />
          <path d="M12.500 20.500C16 17 21 17 24.500 20.500L18.500 27Z" fill="#fff" stroke="none" />
        </svg>
      </div>
      <span className="font-semibold">3:16 PM</span>
      <div className="flex items-center justify-end">
        <svg role="img" aria-label="Location in use" viewBox="0 0 27 28" className="h-7 w-[27px]" fill="#fff">
          <path d="M27 0L15 28V12.500L0 12Z" />
        </svg>
        <svg role="img" aria-label="Bluetooth" viewBox="0 0 23 42" className="ml-[17px] h-[42px] w-[23px]" fill="none" stroke="#fff" strokeWidth="3">
          <path d="M1.500 10L21 30L12 38.500V3.500L21 12L1.500 32" />
        </svg>
        <svg role="img" aria-label="Battery 65%, charging" viewBox="0 0 100 30" className="ml-[19px] h-[30px] w-[100px]" fill="none">
          <rect x="0.500" y="1" width="66" height="28" rx="4" stroke="#fff" />
          <path d="M4 3H44V28H4Q2 28 2 26V5Q2 3 4 3Z" fill="#4cd964" />
          <path d="M69 11C74 11 74 21 69 21Z" fill="#fff" />
          <path d="M95 0L83 16.500H89.500L86.500 30L99.500 12H92.500Z" fill="#fff" />
        </svg>
      </div>
    </div>
  );
}

export default function App() {
  return (
    <div className="min-h-screen bg-white font-['Inter',sans-serif] text-[#444444]">
      <Gradients />
      <header className="bg-[#689f60] text-white">
        <StatusBar />
        <nav className="grid h-33 grid-cols-[1fr_auto_1fr] items-center px-15">
          <button type="button" aria-label="Menu" className="flex w-16 flex-col gap-2 pb-1">
            <span className="h-2.5 rounded-full bg-white" />
            <span className="h-2.5 rounded-full bg-white" />
            <span className="h-2.5 rounded-full bg-white" />
          </button>
          <h1 className="text-[50px] leading-15 font-semibold">Ride Report</h1>
          <button type="button" aria-label="Map" className="justify-self-end pb-1">
            <svg viewBox="0 0 66 66" className="size-[66px]" fill="none" stroke="#f7f7f7" strokeWidth="6" strokeLinejoin="round">
              <path d="M3 13L23 3L43 13L63 3V53L43 63L23 53L3 63ZM23 3V53M43 13V63" />
            </svg>
          </button>
        </nav>
      </header>
      <main>
        <a href="#trophies" className="flex items-center border-b border-[#cdd6c1] bg-[#f8fff6] pr-15 pl-14">
          <div className="flex-1 pt-[21px] pb-[37px]">
            <div className="flex items-center gap-7 text-[47px] leading-[66px] font-semibold">
              <Heart tone="purple" className="size-[66px]" />
              <span>4 day ride streak</span>
            </div>
            <div className="mt-[21px] flex items-center gap-7 text-[47px] leading-[66px] font-semibold">
              <Trophy className="size-[66px]" />
              <span>409 Trophies</span>
            </div>
            <div className="mt-[25px] grid grid-cols-[repeat(12,64px)] gap-x-5 gap-y-[13px]">
              <Tornado />
              <Fire />
              <Heart tone="yellow" />
              <Rocket />
              <Island />
              <Party />
              <Hands />
              <Chick />
              <Drops />
              <Snowman />
              <Pepper />
              <Heart tone="green" />
              <Hotel />
              <Bridge />
              <Sunrise />
              <Sunglasses />
              <Museum />
              <Surfer />
              <Cyclist />
              <Thermometer />
              <Heart tone="blue" />
              <Hundred />
              <Heart tone="purple" />
              <Locomotive />
            </div>
          </div>
          <Chevron className="h-10 w-6 shrink-0 text-[#444444]" />
        </a>
        {SECTIONS.map((section, s) => (
          <section key={section.title}>
            <h2 className="h-[79px] px-6 pt-2.5 text-[47px] leading-15 font-semibold">{section.title}</h2>
            <ul>
              {section.trips.map((trip, i) => (
                <TripRow key={trip.text} trip={trip} last={s === 0 && i === section.trips.length - 1} />
              ))}
            </ul>
          </section>
        ))}
      </main>
    </div>
  );
}
